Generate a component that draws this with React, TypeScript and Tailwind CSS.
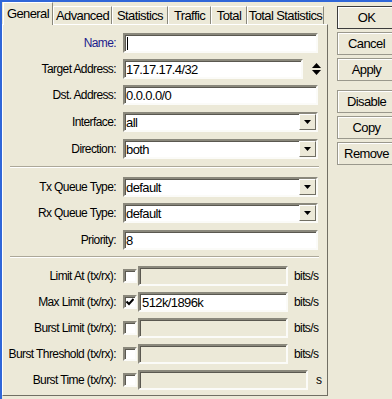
import React from "react";

const sunken =
  "border-2 border-t-[#8a887c] border-l-[#8a887c] border-b-[#fbfbf8] border-r-[#fbfbf8] shadow-[inset_1px_1px_0_#5a5850]";

const tabs = [
  { label: "General", w: "w-[50px]", active: true },
  { label: "Advanced", w: "w-[59px]" },
  { label: "Statistics", w: "w-[56px]" },
  { label: "Traffic", w: "w-[43px]" },
  { label: "Total", w: "w-[36px]" },
  { label: "Total Statistics", w: "w-[77px]" },
];

function Label({ text, blue = false }: { text: string; blue?: boolean }) {
  return (
    <div
      className={`w-[114px] shrink-0 text-right pr-[1px] whitespace-nowrap ${
        blue ? "text-[#1c1c8c]" : "text-black"
      }`}
    >
      {text}
    </div>
  );
}

function Row({
  label,
  mt,
  children,
  blue,
}: {
  label: string;
  mt: string;
  children: React.ReactNode;
  blue?: boolean;
}) {
  return (
    <div className={`flex items-center h-[20px] gap-[6px] ${mt}`}>
      <Label text={label} blue={blue} />
      {children}
    </div>
  );
}

function TextBox({ value, w = "w-[195px]", caret = false }: { value?: string; w?: string; caret?: boolean }) {
  return (
    <div className={`${w} h-[20px] bg-white ${sunken} flex items-center pl-[1px] leading-none text-[13px]`}>
      {caret && <span className="w-[1px] h-[13px] bg-black ml-[1px]" />}
      {value}
    </div>
  );
}

function ComboBox({ value }: { value: string }) {
  return (
    <div className={`w-[195px] h-[20px] bg-white ${sunken} flex items-center justify-between pl-[1px] leading-none text-[13px]`}>
      <span>{value}</span>
      <div className="w-[17px] h-[16px] bg-[#ece9d8] border border-t-white border-l-white border-b-[#716f64] border-r-[#716f64] flex items-center justify-center">
        <svg width="7" height="4" viewBox="0 0 7 4">
          <path d="M0 0H7L3.5 4Z" fill="#000" />
        </svg>
      </div>
    </div>
  );
}

function CheckBox({ checked = false }: { checked?: boolean }) {
  return (
    <div className={`w-[14px] h-[14px] bg-white ${sunken} flex items-center justify-center`}>
      {checked && (
        <svg width="8" height="8" viewBox="0 0 8 8">
          <path d="M0.5 3.5L3 6L7.5 1" stroke="#000" strokeWidth="2" fill="none" />
        </svg>
      )}
    </div>
  );
}

function LimitRow({
  label,
  mt,
  value,
  unit = "bits/s",
  checked,
}: {
  label: string;
  mt: string;
  value?: string;
  unit?: string;
  checked?: boolean;
}) {
  const wide = unit === "s";
  return (
    <div className={`flex items-center h-[20px] ${mt}`}>
      <Label text={label} />
      <div className="ml-[6px]">
        <CheckBox checked={checked} />
      </div>
      <div
        className={`ml-[1px] ${wide ? "w-[170px]" : "w-[150px]"} h-[20px] ${
          checked ? "bg-white" : "bg-[#ece9d8]"
        } ${sunken} flex items-center pl-[2px] leading-none text-[13px]`}
      >
        {value}
      </div>
      <span className={wide ? "ml-[8px]" : "ml-[6px]"}>{unit}</span>
    </div>
  );
}

function Divider({ mt }: { mt: string }) {
  return <div className={`${mt} ml-[7px] mr-[8px] h-[2px] border-t border-[#aca899] border-b border-b-white`} />;
}

function Btn({ label, mt, primary = false }: { label: string; mt: string; primary?: boolean }) {
  return (
    <div
      className={`${mt} w-[62px] h-[23px] shrink-0 flex items-center justify-center bg-[#ece9d8] border ${
        primary ? "border-[#3c3c3c]" : "border-[#9a988c]"
      } shadow-[inset_1px_1px_0_#ffffff]`}
    >
      <span className="-ml-[3px] text-[13px]">{label}</span>
    </div>
  );
}

export default function App() {
  return (
    <div className="w-[392px] h-[399px] overflow-hidden bg-[#ece9d8] border-t-2 border-l-2 border-[#2f66d8] flex text-[12px] tracking-[-0.6px] text-black font-['Liberation_Sans',Arial,sans-serif] leading-none">
      <div className="w-[326px] shrink-0 flex flex-col">
        <div className="h-[22px] flex items-end pl-[1px] relative z-10">
          {tabs.map((t) =>
            t.active ? (
              <div
                key={t.label}
                className={`${t.w} h-[23px] -mb-[1px] bg-[#ece9d8] border-t border-l border-white border-r border-r-[#8a887c] flex items-center justify-center pb-[1px] text-[13px] whitespace-nowrap`}
              >
                {t.label}
              </div>
            ) : (
              <div
                key={t.label}
                className={`${t.w} h-[18px] bg-[#ece9d8] border-t border-l border-white border-r border-r-[#8a887c] flex items-center justify-center text-[13px] whitespace-nowrap`}
              >
                {t.label}
              </div>
            )
          )}
        </div>
        <div className="h-[372px] border-t border-l border-white border-r border-r-[#716f64] border-b border-b-[#716f64] flex flex-col">
          <Row label="Name:" mt="mt-[8px]" blue>
            <TextBox caret />
          </Row>
          <Row label="Target Address:" mt="mt-[6px]">
            <TextBox value="17.17.17.4/32" w="w-[180px]" />
            <svg width="9" height="12" viewBox="0 0 9 12" className="ml-[3px]">
              <path d="M4.5 0L9 5H0Z" fill="#000" />
              <path d="M0 7H9L4.5 12Z" fill="#000" />
            </svg>
          </Row>
          <Row label="Dst. Address:" mt="mt-[6px]">
            <TextBox value="0.0.0.0/0" />
          </Row>
          <Row label="Interface:" mt="mt-[7px]">
            <ComboBox value="all" />
          </Row>
          <Row label="Direction:" mt="mt-[7px]">
            <ComboBox value="both" />
          </Row>
          <Divider mt="mt-[7px]" />
          <Row label="Tx Queue Type:" mt="mt-[9px]">
            <ComboBox value="default" />
          </Row>
          <Row label="Rx Queue Type:" mt="mt-[6px]">
            <ComboBox value="default" />
          </Row>
          <Row label="Priority:" mt="mt-[7px]">
            <TextBox value="8" />
          </Row>
          <Divider mt="mt-[6px]" />
          <LimitRow label="Limit At (tx/rx):" mt="mt-[8px]" />
          <LimitRow label="Max Limit (tx/rx):" mt="mt-[6px]" value="512k/1896k" checked />
          <LimitRow label="Burst Limit (tx/rx):" mt="mt-[6px]" />
          <LimitRow label="Burst Threshold (tx/rx):" mt="mt-[6px]" />
          <LimitRow label="Burst Time (tx/rx):" mt="mt-[6px]" unit="s" />
        </div>
      </div>
      <div className="ml-[9px] flex flex-col">
        <Btn label="OK" mt="mt-[4px]" primary />
        <Btn label="Cancel" mt="mt-[3px]" />
        <Btn label="Apply" mt="mt-[3px]" />
        <Btn label="Disable" mt="mt-[9px]" />
        <Btn label="Copy" mt="mt-[3px]" />
        <Btn label="Remove" mt="mt-[3px]" />
      </div>
    </div>
  );
}
